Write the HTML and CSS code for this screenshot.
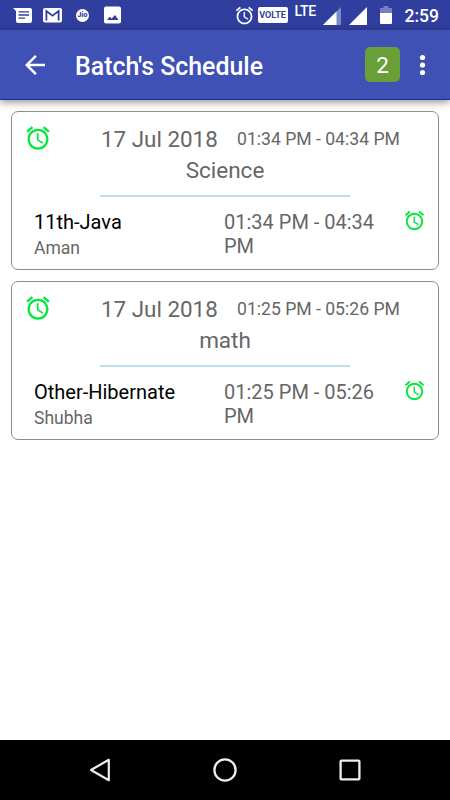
FILE: index.html
```html
<!DOCTYPE html>
<html lang="en">
<head>
    <meta charset="UTF-8">
    <meta name="viewport" content="width=device-width, initial-scale=1.0">
    <title>Batch's Schedule</title>
    <link rel="stylesheet" href="styles.css">
</head>
<body>
    <!-- shared alarm icon -->
    <svg class="defs" width="0" height="0">
        <symbol id="alarm" viewBox="0 0 24 24">
            <path d="M22 5.72l-4.6-3.86-1.29 1.53 4.6 3.86L22 5.72zM7.88 3.39L6.6 1.86 2 5.71l1.29 1.53 4.59-3.85zM12.5 8H11v6l4.75 2.85.75-1.23-4-2.37V8zM12 4c-4.97 0-9 4.03-9 9s4.02 9 9 9c4.97 0 9-4.03 9-9s-4.03-9-9-9zm0 16c-3.87 0-7-3.13-7-7s3.13-7 7-7 7 3.13 7 7-3.13 7-7 7z"/>
        </symbol>
    </svg>

    <div class="screen">
        <div class="status-bar">
            <div class="status-left">
                <svg class="icon-message" width="19" height="16" viewBox="0 0 19 16">
                    <path fill="#fff" d="M0 1h17q2 0 2 2v11q0 2-2 2H5q-2 0-2-2V4z"/>
                    <path stroke="#303f9f" stroke-width="1.3" d="M5.5 4.8H16M5.5 8H16M5.5 11.2H12"/>
                </svg>
                <svg class="icon-mail" width="19" height="16" viewBox="0 0 19 16">
                    <rect y="1" width="19" height="14.5" rx="2" fill="#fff"/>
                    <path fill="none" stroke="#303f9f" stroke-width="1.8" d="M3.4 13.5V4L9.5 8.6 15.6 4V13.5"/>
                </svg>
                <span class="jio">Jio</span>
                <svg class="icon-image" width="17" height="18" viewBox="0 0 17 18">
                    <rect y=".5" width="17" height="17" rx="2" fill="#fff"/>
                    <path fill="#303f9f" d="M3 14l2.7-3.2 2 1.8L11 9l3.5 5z"/>
                </svg>
            </div>
            <div class="status-right">
                <svg class="icon-alarm" width="21" height="21"><use href="#alarm"/></svg>
                <span class="volte">VOLTE</span>
                <span class="lte">LTE</span>
                <svg class="icon-signal" width="18" height="18" viewBox="0 0 18 18">
                    <path fill="#7f89c6" d="M18 0v18H0z"/>
                    <path fill="#fff" d="M13.5 4.5V18H0z"/>
                </svg>
                <svg class="icon-signal" width="18" height="18" viewBox="0 0 18 18">
                    <path fill="#fff" d="M18 0v18H0z"/>
                </svg>
                <svg class="icon-battery" width="12" height="18" viewBox="0 0 12 18">
                    <path fill="#7580c1" d="M3.5 0h5v2H12v6H0V2h3.5z"/>
                    <path fill="#fff" d="M0 7h12v10q0 1-1 1H1q-1 0-1-1z"/>
                </svg>
                <span class="clock">2:59</span>
            </div>
        </div>

        <header class="app-bar">
            <svg class="back" width="30" height="30" viewBox="0 0 24 24">
                <path fill="#fff" d="M20 11H7.83l5.59-5.59L12 4l-8 8 8 8 1.41-1.41L7.83 13H20v-2z"/>
            </svg>
            <h1>Batch's Schedule</h1>
            <span class="count">2</span>
            <svg class="more" width="7" height="22" viewBox="0 0 7 22">
                <g fill="#fff">
                    <circle cx="3.5" cy="3.5" r="2.6"/>
                    <circle cx="3.5" cy="11" r="2.6"/>
                    <circle cx="3.5" cy="18.5" r="2.6"/>
                </g>
            </svg>
        </header>

        <main class="list">
            <div class="card">
                <div class="card-top">
                    <svg class="alarm-big" width="28" height="28"><use href="#alarm"/></svg>
                    <span class="date">17 Jul 2018</span>
                    <span class="time">01:34 PM - 04:34 PM</span>
                </div>
                <div class="subject">Science</div>
                <div class="divider"></div>
                <div class="card-bottom">
                    <div class="batch">
                        <div class="batch-name">11th-Java</div>
                        <div class="teacher">Aman</div>
                    </div>
                    <div class="slot">01:34 PM - 04:34 PM</div>
                    <svg class="alarm-small" width="23" height="23"><use href="#alarm"/></svg>
                </div>
            </div>

            <div class="card">
                <div class="card-top">
                    <svg class="alarm-big" width="28" height="28"><use href="#alarm"/></svg>
                    <span class="date">17 Jul 2018</span>
                    <span class="time">01:25 PM - 05:26 PM</span>
                </div>
                <div class="subject">math</div>
                <div class="divider"></div>
                <div class="card-bottom">
                    <div class="batch">
                        <div class="batch-name">Other-Hibernate</div>
                        <div class="teacher">Shubha</div>
                    </div>
                    <div class="slot">01:25 PM - 05:26 PM</div>
                    <svg class="alarm-small" width="23" height="23"><use href="#alarm"/></svg>
                </div>
            </div>
        </main>

        <div class="nav-bar">
            <svg width="24" height="26" viewBox="0 0 24 26">
                <path fill="none" stroke="#eee" stroke-width="2.2" stroke-linejoin="round" d="M20.8 2.8v20.4L3 13z"/>
            </svg>
            <svg width="24" height="24" viewBox="0 0 24 24">
                <circle cx="12" cy="12" r="10.6" fill="none" stroke="#eee" stroke-width="2.3"/>
            </svg>
            <svg width="24" height="24" viewBox="0 0 24 24">
                <rect x="2.6" y="2.6" width="18.8" height="18.8" rx="1" fill="none" stroke="#eee" stroke-width="2.3"/>
            </svg>
        </div>
    </div>
</body>
</html>
```
FILE: styles.css
```css
* {
    box-sizing: border-box;
}
body {
    margin: 0;
    font-family: Roboto, sans-serif;
    background-color: #fff;
    color: #666;
}
svg {
    display: block;
    flex-shrink: 0;
}
.defs {
    position: absolute;
}
.screen {
    display: flex;
    flex-direction: column;
    width: 450px;
    height: 800px;
    overflow: hidden;
}

/* status bar */
.status-bar {
    display: flex;
    justify-content: space-between;
    height: 30px;
    padding: 0 11px 0 13px;
    background-color: #303f9f;
    color: #fff;
}
.status-left,
.status-right {
    display: flex;
    align-items: center;
}
.icon-mail {
    margin-left: 11px;
}
.jio {
    width: 13px;
    height: 13px;
    margin: 0 15px 0 14px;
    border-radius: 50%;
    background-color: #fff;
    color: #303f9f;
    font-size: 7px;
    font-weight: 900;
    line-height: 13px;
    text-align: center;
}
.icon-alarm {
    fill: #fff;
}
.volte {
    width: 30px;
    height: 16px;
    margin-left: 3px;
    border-radius: 2px;
    background-color: #fff;
    color: #303f9f;
    font-size: 9px;
    font-weight: 700;
    line-height: 16px;
    text-align: center;
}
.lte {
    width: 23px;
    margin: 0 5px 8px 7px;
    font-size: 14px;
    font-weight: 500;
    line-height: 16px;
    letter-spacing: -0.4px;
}
.icon-signal {
    margin: 1px 8px 0 0;
}
.icon-battery {
    margin: 0 12.5px 0 5.5px;
}
.clock {
    padding-top: 1px;
    font-size: 17.5px;
    font-weight: 500;
    line-height: 30px;
}

/* app bar */
.app-bar {
    display: flex;
    align-items: center;
    flex-shrink: 0;
    height: 70px;
    padding: 0 24px 0 20px;
    background-color: #3f51b5;
    border-bottom: 1px solid #1c2e9c;
    box-shadow: 0 2px 8px rgba(0, 0, 0, 0.45);
    color: #fff;
}
h1 {
    flex: 1;
    margin: 0 0 0 25px;
    padding-top: 4px;
    font-size: 24.9px;
    font-weight: 500;
    line-height: 30px;
}
.count {
    width: 35px;
    height: 35px;
    margin-right: 19px;
    border-radius: 5px;
    background-color: #689f38;
    font-size: 22.5px;
    line-height: 37px;
    text-align: center;
}

/* schedule cards */
.list {
    flex: 1;
    padding: 11px 11px 0;
}
.card {
    height: 159px;
    margin-bottom: 11px;
    padding: 12px 12px 0;
    border: 1px solid #8c8c8c;
    border-radius: 7px;
}
.card-top {
    display: flex;
    height: 31px;
}
.alarm-big,
.alarm-small {
    fill: #00e83c;
}
.alarm-small {
    margin-top: -1px;
}
.date {
    width: 136px;
    margin-left: 49px;
    font-size: 22.4px;
    line-height: 30px;
}
.time {
    font-size: 17.6px;
    line-height: 30px;
}
.subject {
    font-size: 22.5px;
    line-height: 30px;
    text-align: center;
}
.divider {
    width: 250px;
    height: 2px;
    margin: 10px auto 13px;
    background-color: #bde0ee;
}
.card-bottom {
    display: flex;
    padding-left: 10px;
}
.batch {
    width: 190px;
}
.batch-name {
    color: #000;
    font-size: 20px;
    line-height: 24px;
}
.teacher {
    margin-top: 2px;
    font-size: 17.5px;
    line-height: 24px;
}
.slot {
    width: 160px;
    margin-right: 19px;
    font-size: 20px;
    line-height: 24px;
}

/* navigation bar */
.nav-bar {
    display: flex;
    align-items: center;
    justify-content: center;
    gap: 101px;
    height: 60px;
    background-color: #000;
}
```
